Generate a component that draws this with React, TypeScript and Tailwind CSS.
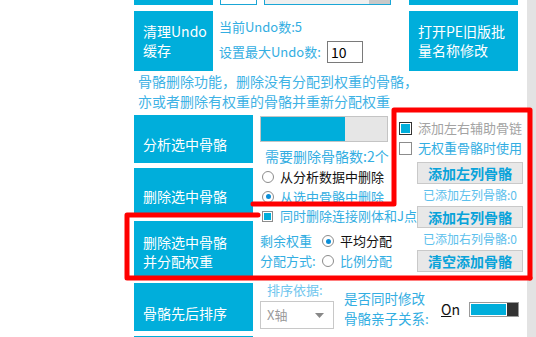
import React from "react";

const font = { fontFamily: '"Noto Sans CJK SC", "Noto Sans", sans-serif' };

function BlueButton({ className = "", children }: { className?: string; children: React.ReactNode }) {
    return (
        <div className={`flex shrink-0 flex-col justify-center bg-[#00aedb] pl-[9px] text-[14px] leading-[19px] text-white ${className}`}>
            {children}
        </div>
    );
}

function Radio({ checked = false }: { checked?: boolean }) {
    return (
        <span className="flex h-[12px] w-[12px] shrink-0 items-center justify-center rounded-full border border-[#8c8c8c] bg-white">
            {checked && <span className="h-[5px] w-[5px] rounded-full bg-[#0a8ed8]" />}
        </span>
    );
}

function Check({ checked = false, size = 13, dark = false }: { checked?: boolean; size?: number; dark?: boolean }) {
    return (
        <span
            className={`flex shrink-0 items-center justify-center border bg-white ${dark ? "border-[#333]" : "border-[#8c8c8c]"} ${size === 13 ? "h-[13px] w-[13px]" : "h-[11px] w-[11px]"}`}
        >
            {checked && <span className={`${size === 13 ? "h-[9px] w-[9px]" : "h-[7px] w-[7px]"} bg-[#00aedb]`} />}
        </span>
    );
}

function GrayButton({ children }: { children: React.ReactNode }) {
    return (
        <div className="ml-[18px] flex h-[22px] w-[106px] items-center justify-center border border-[#c9c9c9] bg-[#e8e8e8] text-[14px] font-bold text-[#09a3da]">
            {children}
        </div>
    );
}

export default function App() {
    return (
        <div className="relative flex h-[337px] w-[536px] overflow-hidden bg-white" style={font}>
            <div className="w-[134px] shrink-0" />

            <div className="flex w-[393px] shrink-0 flex-col">
                {/* cut-off row at top */}
                <div className="flex h-[5px] shrink-0">
                    <div className="w-[79px] bg-[#00aedb]" />
                    <div className="ml-[7px] w-[37px] border-x border-b border-[#1aa6d6] bg-white" />
                    <div className="ml-[7px] flex w-[127px] border-x border-b border-[#1aa6d6] bg-[#efefef]">
                        <div className="ml-auto w-[21px] bg-[#c8c8c8]" />
                    </div>
                    <div className="ml-[18px] w-[109px] bg-[#00aedb]" />
                </div>

                {/* undo row */}
                <div className="mt-[6px] flex h-[60px] shrink-0">
                    <BlueButton className="w-[79px]">
                        <span>清理Undo</span>
                        <span>缓存</span>
                    </BlueButton>
                    <div className="ml-[6px] flex w-[190px] flex-col text-[13px] whitespace-nowrap text-[#33aee2]">
                        <div className="mt-[6px] leading-[20px]">当前Undo数:5</div>
                        <div className="mt-[4px] flex h-[22px] items-center">
                            <span className="w-[108px] leading-[20px]">设置最大Undo数:</span>
                            <span className="flex h-[22px] w-[36px] items-center border border-[#7a7a7a] bg-white pl-[3px] text-[14px] text-black">10</span>
                        </div>
                    </div>
                    <BlueButton className="w-[109px]">
                        <span>打开PE旧版批</span>
                        <span>量名称修改</span>
                    </BlueButton>
                </div>

                <div className="pl-[4px] text-[14px] leading-[20px] whitespace-nowrap text-[#3eb2e5]">
                    <div>骨骼删除功能，删除没有分配到权重的骨骼，</div>
                    <div>亦或者删除有权重的骨骼并重新分配权重</div>
                </div>

                {/* bone delete block */}
                <div className="mt-[4px] flex h-[161px] shrink-0">
                    <div className="flex w-[119px] flex-col">
                        <BlueButton className="h-[48px] pt-[10px]">分析选中骨骼</BlueButton>
                        <BlueButton className="mt-[5px] h-[45px] pt-[12px]">删除选中骨骼</BlueButton>
                        <BlueButton className="mt-[8px] h-[55px] pt-[7px]">
                            <span>删除选中骨骼</span>
                            <span>并分配权重</span>
                        </BlueButton>
                    </div>

                    <div className="ml-[7px] flex w-[139px] shrink-0 flex-col text-[13px] leading-[20px] whitespace-nowrap">
                        <div className="mt-[1px] flex h-[26px] w-[128px] border border-[#c4c4c4] bg-[#e6e6e6]">
                            <div className="w-[84px] bg-[#00aedb]" />
                        </div>
                        <div className="mt-[4px] h-[20px] pl-[5px] text-[14px] text-[#33aee2]">需要删除骨骼数:2个</div>
                        <div className="mt-[1px] flex h-[20px] items-center pl-[2px]">
                            <Radio />
                            <span className="ml-[6px] text-[#111]">从分析数据中删除</span>
                        </div>
                        <div className="flex h-[19px] items-center pl-[2px]">
                            <Radio checked />
                            <span className="ml-[6px] text-[#33aee2]">从选中骨骼中删除</span>
                        </div>
                        <div className="flex h-[20px] items-center pl-[2px]">
                            <Check checked size={11} />
                            <span className="ml-[7px] text-[#33aee2]">同时删除连接刚体和J点</span>
                        </div>
                        <div className="mt-[5px] flex h-[20px] items-center">
                            <span className="w-[62px] text-[#33aee2]">剩余权重</span>
                            <Radio checked />
                            <span className="ml-[6px] text-[#111]">平均分配</span>
                        </div>
                        <div className="flex h-[19px] items-center">
                            <span className="w-[62px] text-[#33aee2]">分配方式:</span>
                            <Radio />
                            <span className="ml-[6px] text-[#33aee2]">比例分配</span>
                        </div>
                    </div>

                    <div className="flex w-[124px] shrink-0 flex-col text-[13px] leading-[20px] whitespace-nowrap">
                        <div className="mt-[3px] flex h-[20px] items-center">
                            <Check checked dark />
                            <span className="ml-[6px] text-[#a3a3a3]">添加左右辅助骨链</span>
                        </div>
                        <div className="flex h-[20px] items-center">
                            <Check />
                            <span className="ml-[6px] text-[#33aee2]">无权重骨骼时使用</span>
                        </div>
                        <div className="mt-[4px]">
                            <GrayButton>添加左列骨骼</GrayButton>
                        </div>
                        <div className="h-[21px] pl-[24px] text-[12px] leading-[21px] text-[#5cc0ec]">已添加左列骨骼:0</div>
                        <div className="mt-[1px]">
                            <GrayButton>添加右列骨骼</GrayButton>
                        </div>
                        <div className="mt-[1px] h-[20px] pl-[24px] text-[12px] leading-[20px] text-[#5cc0ec]">已添加右列骨骼:0</div>
                        <div className="mt-[1px]">
                            <GrayButton>清空添加骨骼</GrayButton>
                        </div>
                    </div>
                </div>

                {/* sort row */}
                <div className="mt-[7px] flex h-[48px] shrink-0 text-[13px] whitespace-nowrap">
                    <BlueButton className="w-[119px] pt-[12px]">骨骼先后排序</BlueButton>
                    <div className="ml-[7px] flex w-[74px] flex-col">
                        <span className="pl-[7px] leading-[14px] text-[#6fc6ee]">排序依据:</span>
                        <div className="mt-[4px] flex h-[28px] items-center border border-[#c8c8c8] bg-white pl-[6px]">
                            <span className="text-[#9a9a9a]">X轴</span>
                            <svg className="ml-auto mr-[9px]" width="9" height="5" viewBox="0 0 9 5">
                                <path d="M0 0h9L4.5 5z" fill="#888" />
                            </svg>
                        </div>
                    </div>
                    <div className="ml-[10px] mt-[5px] flex w-[97px] flex-col text-[13.5px] leading-[20px] text-[#33aee2]">
                        <span>是否同时修改</span>
                        <span>骨骼亲子关系:</span>
                    </div>
                    <div className="mt-[19px] flex h-[15px] items-center">
                        <span className="text-[14px] text-[#111]">
                            <span className="underline">O</span>n
                        </span>
                        <div className="ml-[9px] flex h-[15px] w-[50px] border border-[#9a9a9a] bg-white">
                            <div className="m-[1px] w-[37px] bg-[#00aedb]" />
                            <div className="ml-auto w-[11px] bg-[#333]" />
                        </div>
                    </div>
                </div>

                {/* cut-off row at bottom */}
                <div className="mt-[5px] flex h-[10px] shrink-0">
                    <div className="w-[119px] bg-[#00aedb]" />
                    <div className="ml-[7px] mt-[2px]">
                        <Check size={11} />
                    </div>
                </div>
            </div>

            <div className="w-[9px] shrink-0 bg-[#e3e3e3]" />

            {/* red hand-drawn annotation */}
            <svg className="pointer-events-none absolute left-0 top-0 z-20" width="536" height="337" viewBox="0 0 536 337">
                <polyline
                    points="253,204 394,204 394,110 530,110 530,278"
                    fill="none"
                    stroke="#ff0000"
                    strokeWidth="5"
                    strokeLinejoin="round"
                    strokeLinecap="round"
                />
                <polyline
                    points="258,215 127,215 127,278 530,278"
                    fill="none"
                    stroke="#ff0000"
                    strokeWidth="5"
                    strokeLinejoin="round"
                    strokeLinecap="round"
                />
            </svg>
        </div>
    );
}
